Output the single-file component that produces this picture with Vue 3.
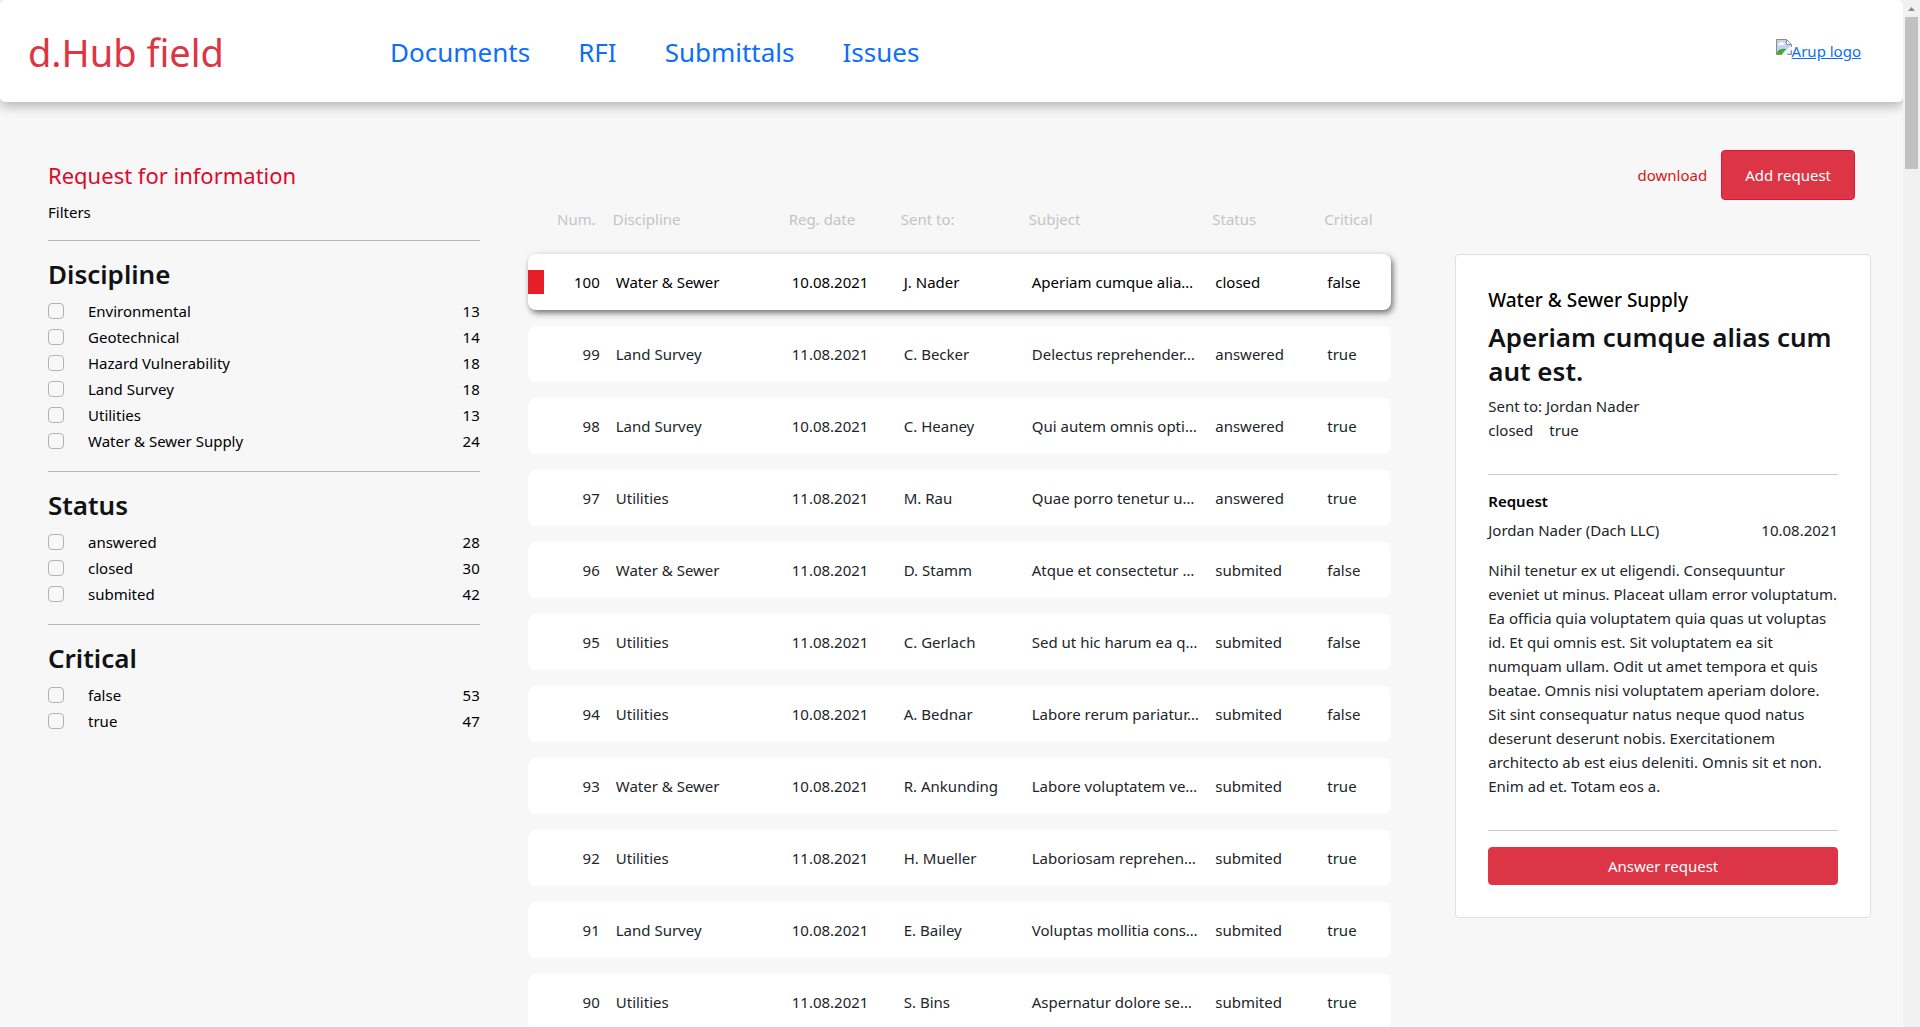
<script setup>
import { ref } from 'vue'

const links = ['Documents', 'RFI', 'Submittals', 'Issues']

const filters = [
  {
    title: 'Discipline',
    options: [
      ['Environmental', 13],
      ['Geotechnical', 14],
      ['Hazard Vulnerability', 18],
      ['Land Survey', 18],
      ['Utilities', 13],
      ['Water & Sewer Supply', 24],
    ],
  },
  { title: 'Status', options: [['answered', 28], ['closed', 30], ['submited', 42]] },
  { title: 'Critical', options: [['false', 53], ['true', 47]] },
]

const selected = ref(100)
const requests = [
  [100, 'Water & Sewer', '10.08.2021', 'J. Nader', 'Aperiam cumque alia…', 'closed', 'false'],
  [99, 'Land Survey', '11.08.2021', 'C. Becker', 'Delectus reprehender…', 'answered', 'true'],
  [98, 'Land Survey', '10.08.2021', 'C. Heaney', 'Qui autem omnis opti…', 'answered', 'true'],
  [97, 'Utilities', '11.08.2021', 'M. Rau', 'Quae porro tenetur u…', 'answered', 'true'],
  [96, 'Water & Sewer', '11.08.2021', 'D. Stamm', 'Atque et consectetur …', 'submited', 'false'],
  [95, 'Utilities', '11.08.2021', 'C. Gerlach', 'Sed ut hic harum ea q…', 'submited', 'false'],
  [94, 'Utilities', '10.08.2021', 'A. Bednar', 'Labore rerum pariatur…', 'submited', 'false'],
  [93, 'Water & Sewer', '10.08.2021', 'R. Ankunding', 'Labore voluptatem ve…', 'submited', 'true'],
  [92, 'Utilities', '11.08.2021', 'H. Mueller', 'Laboriosam reprehen…', 'submited', 'true'],
  [91, 'Land Survey', '10.08.2021', 'E. Bailey', 'Voluptas mollitia cons…', 'submited', 'true'],
  [90, 'Utilities', '11.08.2021', 'S. Bins', 'Aspernatur dolore se…', 'submited', 'true'],
]
</script>

<template>
  <div class="page">
    <header class="topbar">
      <a class="brand" href="#">d.Hub field</a>
      <nav class="nav">
        <a v-for="link in links" :key="link" href="#">{{ link }}</a>
      </nav>
      <a class="logo" href="#">
        <svg width="16" height="16" viewBox="0 0 16 16" aria-hidden="true">
          <path d="M.5.5h10l5 5v5l-5 5H.5z" fill="#c3d5f6" />
          <path d="M2 6c0-1.500 1-2 2-2 .5-1.500 3-1.500 3.500 0C9 4 9 6 8 6z" fill="#fff" />
          <path d="M1 14c1-4 5-5 9-4l-4 5H1z" fill="#3fae2a" />
          <path d="M16 6v3L9 16H6z" fill="#fff" />
          <path d="M16 11v5h-5z" fill="#c3d5f6" />
          <path d="M10.500.5v5h5z" fill="#fff" />
          <path d="M6 15.500H.5V.5h10l5 5V8M10.500.5v5h5M15.500 11.500v4h-4" fill="none" stroke="#8c8c8c" />
        </svg><span>Arup logo</span>
      </a>
    </header>

    <main class="columns">
      <aside class="filters">
        <h1>Request for information</h1>
        <p>Filters</p>
        <section v-for="group in filters" :key="group.title">
          <h2>{{ group.title }}</h2>
          <label v-for="[name, count] in group.options" :key="name">
            <input type="checkbox" />
            <span class="name">{{ name }}</span>
            <span>{{ count }}</span>
          </label>
        </section>
      </aside>

      <table class="requests">
        <thead>
          <tr>
            <th>Num.</th><th>Discipline</th><th>Reg. date</th><th>Sent to:</th>
            <th>Subject</th><th>Status</th><th>Critical</th>
          </tr>
        </thead>
        <tbody>
          <tr
            v-for="row in requests"
            :key="row[0]"
            :class="{ selected: row[0] === selected }"
            @click="selected = row[0]"
          >
            <td v-for="(cell, i) in row" :key="i">{{ cell }}</td>
          </tr>
        </tbody>
      </table>

      <div class="side">
        <div class="actions">
          <a href="#">download</a>
          <button type="button">Add request</button>
        </div>
        <article class="card">
          <h3>Water &amp; Sewer Supply</h3>
          <h2>Aperiam cumque alias cum aut est.</h2>
          <div>Sent to: Jordan Nader</div>
          <div class="tags"><span>closed</span><span>true</span></div>
          <hr />
          <h4>Request</h4>
          <div class="author"><span>Jordan Nader (Dach LLC)</span><span>10.08.2021</span></div>
          <p>
            Nihil tenetur ex ut eligendi. Consequuntur eveniet ut minus. Placeat ullam error voluptatum.
            Ea officia quia voluptatem quia quas ut voluptas id. Et qui omnis est. Sit voluptatem ea sit
            numquam ullam. Odit ut amet tempora et quis beatae. Omnis nisi voluptatem aperiam dolore. Sit
            sint consequatur natus neque quod natus deserunt deserunt nobis. Exercitationem architecto ab
            est eius deleniti. Omnis sit et non. Enim ad et. Totam eos a.
          </p>
          <hr />
          <button type="button">Answer request</button>
        </article>
      </div>
    </main>

    <div class="scrollbar" aria-hidden="true">
      <svg width="17" height="17" viewBox="0 0 17 17"><path d="M5 11l3.500-4 3.500 4z" fill="#8b8b8b" /></svg>
      <div class="thumb"></div>
    </div>
  </div>
</template>

<style>
body {
  margin: 0;
  background: #f7f7f7;
}
</style>

<style scoped>
* {
  box-sizing: border-box;
}
.page {
  height: 100vh;
  overflow: hidden;
  padding-right: 17px;
  background: #f7f7f7;
  color: #000;
  font: 15px/24px "Segoe UI", "Noto Sans", "Open Sans", sans-serif;
}
h1, h2, h3, h4, p {
  margin: 0;
}
.topbar {
  display: flex;
  align-items: center;
  height: 102px;
  padding: 0 42px 0 28px;
  background: #fff;
  border-radius: 5px;
  box-shadow: 0 4px 12px rgba(0, 0, 0, 0.28);
}
.brand {
  width: 362px;
  padding-top: 2px;
  color: #dc3545;
  font-size: 38px;
  line-height: 48px;
  text-decoration: none;
}
.nav {
  display: flex;
  gap: 48px;
  flex: 1;
  padding-top: 2px;
}
.nav a {
  color: #0d6efd;
  font-size: 26px;
  line-height: 34px;
  text-decoration: none;
}
.logo {
  display: flex;
  color: #0d6efd;
}
.columns {
  display: grid;
  grid-template-columns: minmax(0, 1fr) minmax(0, 2fr) minmax(0, 1fr);
  align-items: start;
  gap: 48px;
  padding: 48px 32px 0 48px;
}

.filters {
  padding-top: 10px;
}
.filters h1 {
  margin-bottom: 10px;
  color: #dc0a2d;
  font-size: 22px;
  font-weight: 400;
  line-height: 30px;
}
.filters section {
  margin-top: 16px;
  border-top: 1px solid #b9b9b9;
  padding-top: 16px;
}
h2 {
  margin-bottom: 8px;
  color: #101214;
  font-size: 26px;
  font-weight: 600;
  line-height: 34px;
}
label {
  display: flex;
  align-items: center;
  padding-bottom: 2px;
}
input {
  appearance: none;
  width: 16px;
  height: 16px;
  margin: 0 24px 0 0;
  border: 1px solid #b3b3b3;
  border-radius: 4px;
}
input:checked {
  background: #dc3545;
}
.name {
  flex: 1;
}

.requests {
  display: block;
  padding-top: 57px;
}
thead,
tbody {
  display: block;
}
tr {
  display: grid;
  grid-template-columns: 80px 176px 112px 128px minmax(0, 1fr) 112px 72px;
}
th {
  padding: 0 5px;
  color: #c4c4c4;
  font-weight: 400;
  text-align: left;
}
th:first-child {
  padding-right: 12px;
  text-align: right;
}
thead tr {
  margin-bottom: 23px;
}
tbody tr {
  margin-bottom: 16px;
  padding: 16px 0;
  background: #fff;
  border-radius: 8px;
  color: #212529;
}
tbody tr.selected {
  color: #000;
  box-shadow: 2px 3px 6px rgba(0, 0, 0, 0.55);
}
td {
  padding: 0 8px;
  white-space: nowrap;
}
td:first-child {
  border-left: 16px solid transparent;
  text-align: right;
}
.selected td:first-child {
  border-color: #e61e28;
}

.side {
  padding-left: 16px;
}
.actions {
  display: flex;
  align-items: center;
  justify-content: flex-end;
  gap: 14px;
  margin: 0 16px 54px 0;
}
.actions a {
  color: #dc1414;
  text-decoration: none;
}
button {
  height: 38px;
  border: 1px solid #dc3545;
  border-radius: 4px;
  background: #dc3545;
  color: #fff;
  font: inherit;
}
.actions button {
  height: 50px;
  padding: 0 23px;
  border-color: #dc143c;
}
.card {
  border: 1px solid #dfdfdf;
  border-radius: 4px;
  padding: 32px;
  background: #fff;
  color: #212529;
}
h3 {
  margin-bottom: 7px;
  color: #000;
  font-size: 19px;
  font-weight: 500;
  line-height: 26px;
}
.card h2 {
  margin-bottom: 6px;
}
.tags {
  display: flex;
  gap: 16px;
}
hr {
  margin: 32px 0 16px;
  border: 0;
  border-top: 1px solid #c8c8c9;
}
h4 {
  margin-bottom: 7px;
  color: #000;
  font-size: 15px;
  font-weight: 600;
  line-height: 20px;
}
.author {
  display: flex;
  justify-content: space-between;
  margin-bottom: 16px;
}
.card button {
  display: block;
  width: 100%;
}

.scrollbar {
  position: fixed;
  top: 0;
  right: 0;
  bottom: 0;
  width: 17px;
  background: #f1f1f1;
}
.scrollbar svg {
  display: block;
}
.thumb {
  height: 152px;
  margin: 0 2px;
  background: #c1c1c1;
}
</style>
